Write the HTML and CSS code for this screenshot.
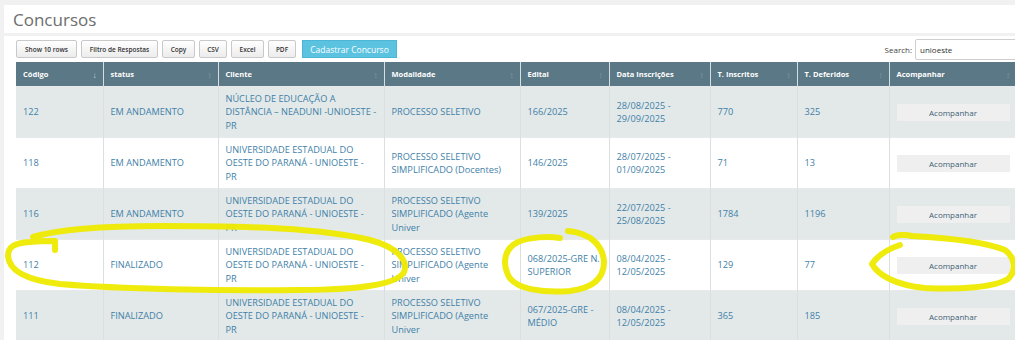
FILE: index.html
```html
<!DOCTYPE html>
<html lang="pt-BR">
<head>
    <meta charset="UTF-8">
    <title>Concursos</title>
    <link rel="stylesheet" href="styles.css">
</head>
<body>
    <div class="page-title">
        <h1>Concursos</h1>
    </div>
    <div class="panel">
        <div class="toolbar">
            <div class="dt-buttons">
                <button class="dt-btn w-show">Show 10 rows</button>
                <button class="dt-btn w-filter">Filtro de Respostas</button>
                <button class="dt-btn w-md">Copy</button>
                <button class="dt-btn w-sm">CSV</button>
                <button class="dt-btn w-md">Excel</button>
                <button class="dt-btn w-sm">PDF</button>
                <button class="btn-info">Cadastrar Concurso</button>
            </div>
            <label class="search">Search: <input type="text" value="unioeste"></label>
        </div>
        <table class="grid">
            <colgroup>
                <col style="width:87px"><col style="width:115px"><col style="width:166px">
                <col style="width:136px"><col style="width:89px"><col style="width:101px">
                <col style="width:87px"><col style="width:92px"><col style="width:127px">
            </colgroup>
            <thead>
                <tr>
                    <th class="sorted">Código</th>
                    <th>status</th>
                    <th>Cliente</th>
                    <th>Modalidade</th>
                    <th>Edital</th>
                    <th>Data Inscrições</th>
                    <th>T. Inscritos</th>
                    <th>T. Deferidos</th>
                    <th>Acompanhar</th>
                </tr>
            </thead>
            <tbody>
                <tr>
                    <td>122</td>
                    <td>EM ANDAMENTO</td>
                    <td>NÚCLEO DE EDUCAÇÃO A DISTÂNCIA – NEADUNI -UNIOESTE -<br>PR</td>
                    <td>PROCESSO SELETIVO</td>
                    <td class="edital">166/2025</td>
                    <td>28/08/2025 - 29/09/2025</td>
                    <td>770</td>
                    <td>325</td>
                    <td><button class="follow">Acompanhar</button></td>
                </tr>
                <tr>
                    <td>118</td>
                    <td>EM ANDAMENTO</td>
                    <td>UNIVERSIDADE ESTADUAL DO OESTE DO PARANÁ - UNIOESTE - PR</td>
                    <td>PROCESSO SELETIVO SIMPLIFICADO (Docentes)</td>
                    <td class="edital">146/2025</td>
                    <td>28/07/2025 - 01/09/2025</td>
                    <td>71</td>
                    <td>13</td>
                    <td><button class="follow">Acompanhar</button></td>
                </tr>
                <tr>
                    <td>116</td>
                    <td>EM ANDAMENTO</td>
                    <td>UNIVERSIDADE ESTADUAL DO OESTE DO PARANÁ - UNIOESTE - PR</td>
                    <td>PROCESSO SELETIVO SIMPLIFICADO (Agente Univer</td>
                    <td class="edital">139/2025</td>
                    <td>22/07/2025 - 25/08/2025</td>
                    <td>1784</td>
                    <td>1196</td>
                    <td><button class="follow">Acompanhar</button></td>
                </tr>
                <tr>
                    <td>112</td>
                    <td>FINALIZADO</td>
                    <td>UNIVERSIDADE ESTADUAL DO OESTE DO PARANÁ - UNIOESTE - PR</td>
                    <td>PROCESSO SELETIVO SIMPLIFICADO (Agente Univer</td>
                    <td class="edital">068/2025-GRE N. SUPERIOR</td>
                    <td>08/04/2025 - 12/05/2025</td>
                    <td>129</td>
                    <td>77</td>
                    <td><button class="follow">Acompanhar</button></td>
                </tr>
                <tr>
                    <td>111</td>
                    <td>FINALIZADO</td>
                    <td>UNIVERSIDADE ESTADUAL DO OESTE DO PARANÁ - UNIOESTE - PR</td>
                    <td>PROCESSO SELETIVO SIMPLIFICADO (Agente Univer</td>
                    <td class="edital">067/2025-GRE - MÉDIO</td>
                    <td>08/04/2025 - 12/05/2025</td>
                    <td>365</td>
                    <td>185</td>
                    <td><button class="follow">Acompanhar</button></td>
                </tr>
            </tbody>
        </table>
    </div>

    <!-- marcações feitas à mão por cima do print -->
    <svg class="marks" width="1015" height="340" viewBox="0 0 1015 340">
        <path d="M33 237 C60 229 100 226 160 226 C250 226 320 228 370 240 C400 248 408 262 404 272 C398 284 360 290 300 290 C220 291 120 289 60 284 C25 280 9 270 8 256 C8 247 14 243 30 242 C40 241 50 241 55 241 L55 250"/>
        <path d="M568 231 C590 233 603 245 604 262 C604 278 594 288 570 291 C545 293 515 290 508 275 C502 262 505 248 518 242 C530 237 548 236 560 238"/>
        <path d="M893 237 C896 235 905 234 912 236 C950 238 985 242 1005 250 C1016 258 1016 272 1008 279 C995 287 960 290 925 288 C895 285 878 275 872 264 C878 255 888 249 900 245"/>
    </svg>
</body>
</html>
```

FILE: styles.css
```css
body {
    margin: 0;
    background-color: #f1f1f1;
    font-family: "Open Sans", Arial, sans-serif;
    position: relative;
    overflow: hidden;
}

.page-title {
    margin: 5px 0 0 4px;
    height: 28px;
    background-color: #fff;
    display: flex;
    align-items: center;
}
.page-title h1 {
    margin: 0 0 0 9px;
    font-size: 17px;
    font-weight: normal;
    color: #6d6d6d;
}

.panel {
    margin: 3px 0 0 4px;
    padding: 2px 0 0 12px;
    background-color: #fff;
    height: 400px;
}

.toolbar {
    display: flex;
    justify-content: space-between;
    align-items: center;
    height: 22px;
    margin-bottom: 2px;
}
.dt-buttons {
    display: flex;
    gap: 4px;
}
.dt-btn {
    height: 18px;
    padding: 0;
    font-family: "Open Sans", Arial, sans-serif;
    font-size: 6.5px;
    font-weight: 600;
    color: #333;
    background: linear-gradient(#fff, #ececec);
    border: 1px solid #c9c9c9;
    border-radius: 2px;
}
.w-show { width: 61px; }
.w-filter { width: 77px; }
.w-md { width: 33px; }
.w-sm { width: 28px; }
.btn-info {
    width: 95px;
    height: 18px;
    margin-left: 2px;
    padding: 0;
    font-family: "Open Sans", Arial, sans-serif;
    font-size: 8.5px;
    color: #fff;
    background-color: #5bc2e0;
    border: 1px solid #4db6d6;
}
.search {
    display: flex;
    align-items: center;
    gap: 3px;
    font-size: 8px;
    color: #444;
    margin-right: -20px;
}
.search input {
    width: 120px;
    height: 21px;
    box-sizing: border-box;
    padding: 0 4px;
    font-family: "Open Sans", Arial, sans-serif;
    font-size: 8px;
    color: #333;
    border: 1px solid #cfcfcf;
    border-radius: 2px;
}

.grid {
    table-layout: fixed;
    border-collapse: collapse;
    width: 1000px;
}
.grid th {
    height: 24px;
    padding: 0 7px;
    background-color: #5b7886;
    color: #fff;
    font-size: 7.5px;
    font-weight: bold;
    text-align: left;
    border-left: 1px solid #d8dde0;
    position: relative;
}
.grid th:first-child {
    border-left: none;
}
.grid th::after {
    content: "\2195";
    position: absolute;
    right: 6px;
    top: 7px;
    font-size: 8px;
    color: #7f97a2;
}
.grid th.sorted::after {
    content: "\2193";
    color: #c9d6dc;
}
.grid td {
    height: 50px;
    padding: 0 7px;
    font-size: 9.2px;
    line-height: 13.5px;
    color: #3f7fa8;
    border-left: 1px solid #dcdfe0;
    border-top: 1px solid #e7e9ea;
}
.grid td.edital {
    padding-right: 2px;
}
.grid td:first-child {
    border-left: none;
}
.grid tbody tr:nth-child(odd) td {
    background-color: #e3e9e9;
}
.grid tbody tr:nth-child(even) td {
    background-color: #fff;
}
.follow {
    width: 113px;
    height: 17px;
    font-family: "Open Sans", Arial, sans-serif;
    font-size: 8px;
    color: #3d5f75;
    background-color: #efefef;
    border: none;
}

.marks {
    position: absolute;
    left: 0;
    top: 0;
    pointer-events: none;
}
.marks path {
    fill: none;
    stroke: #eeea00;
    stroke-width: 6;
    stroke-linecap: round;
    stroke-linejoin: round;
    opacity: 0.95;
}
```
